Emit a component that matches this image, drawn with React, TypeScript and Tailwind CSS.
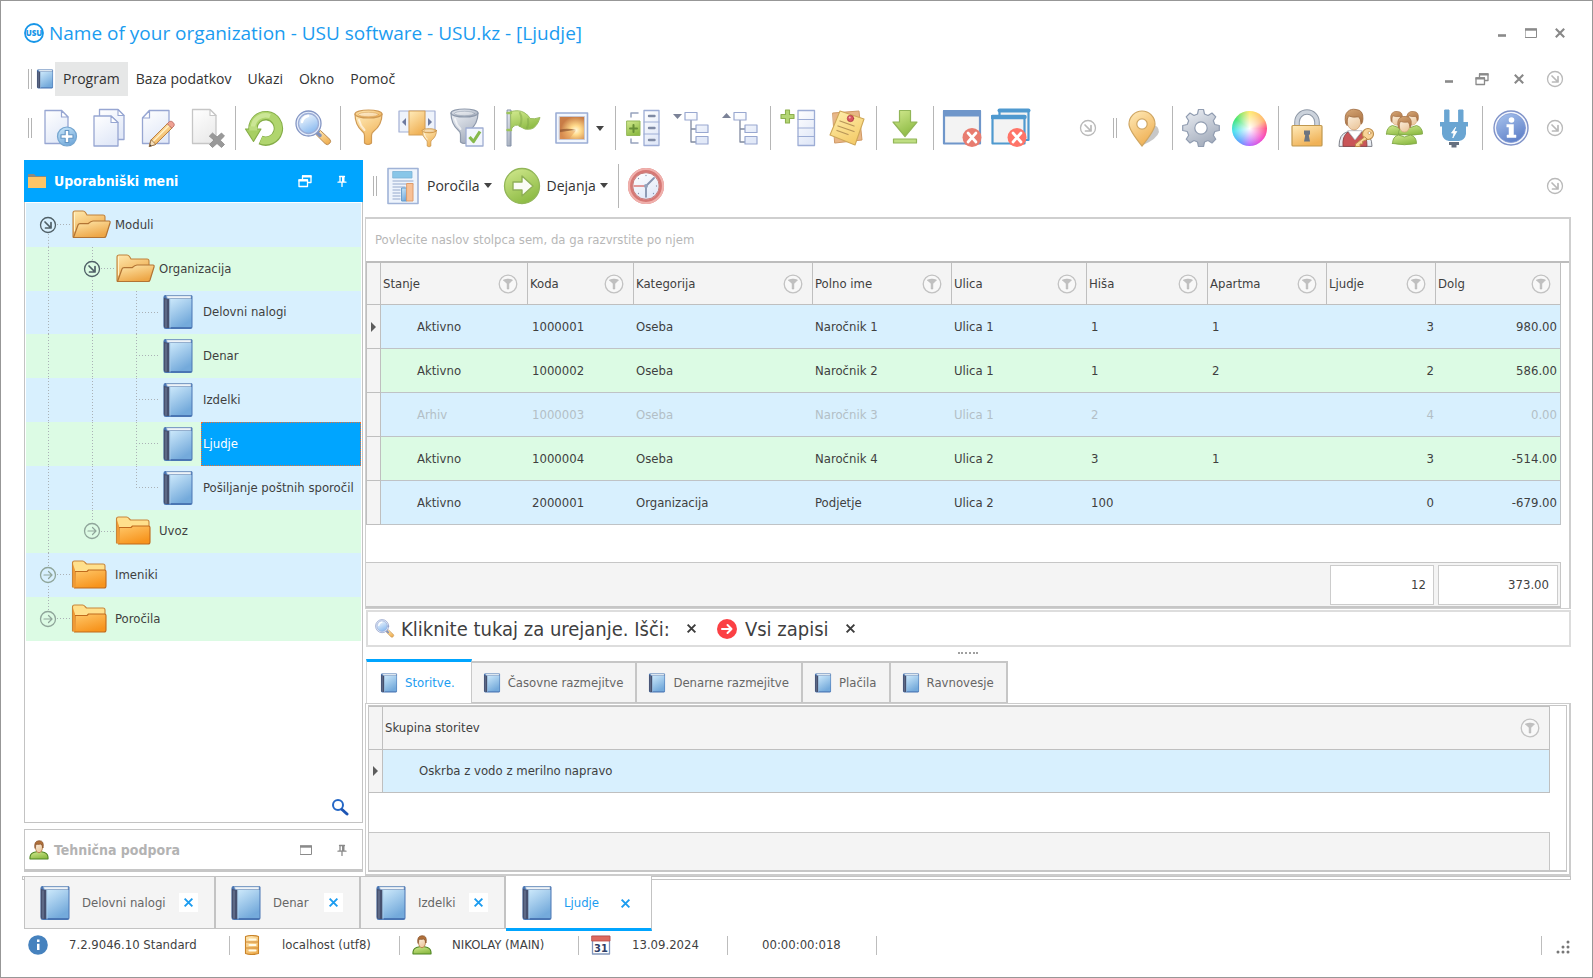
import React from "react";

/* ---------- shared gradients ---------- */

const stops: Record<string, [string, string]> = {
  paper: ["#ffffff", "#e2e9f8"],
  grayPaper: ["#ffffff", "#ebebeb"],
  blue: ["#cde9fb", "#74aadb"],
  green: ["#d3ea90", "#8fbc46"],
  gold: ["#ffebba", "#f0b257"],
  folder: ["#ffe9ae", "#eda646"],
  orange: ["#ffc86a", "#f7941d"],
  steel: ["#eef1f6", "#a6afbe"],
  info: ["#a9c4ee", "#6384ca"],
  hair: ["#d6a878", "#ad7444"],
  face: ["#fdf3e4", "#ecc9a0"],
  lens: ["#ffffff", "#8fbdf0"],
  note: ["#fff0b0", "#f5cd6c"],
};

const Gradients = () => (
  <svg className="absolute h-0 w-0" aria-hidden="true">
    <defs>
      {Object.entries(stops).map(([id, [a, b]]) => (
        <linearGradient key={id} id={id} x1="0" y1="0" x2="0.5" y2="1">
          <stop offset="0" stopColor={a} />
          <stop offset="1" stopColor={b} />
        </linearGradient>
      ))}
      <radialGradient id="sun" cx="0.65" cy="0.6" r="0.6">
        <stop offset="0" stopColor="#fffbe0" />
        <stop offset="0.35" stopColor="#ffd98a" />
        <stop offset="1" stopColor="#c87c46" />
      </radialGradient>
    </defs>
  </svg>
);

type IconProps = { className?: string };
const Ico = ({ children, className = "size-10", box = "0 0 40 40" }: { children: React.ReactNode; className?: string; box?: string }) => (
  <svg viewBox={box} className={`shrink-0 ${className}`} fill="none" strokeLinejoin="round" strokeLinecap="round" aria-hidden="true">
    {children}
  </svg>
);

/* ---------- toolbar icons ---------- */

const NewDoc = () => (
  <Ico>
    <path d="M4 2.500H20.500L27 9V35.500H4z" fill="url(#paper)" stroke="#97a6d2" strokeWidth="1.300" />
    <path d="M20.500 2.500V9H27z" fill="#fff" stroke="#97a6d2" strokeWidth="1.200" />
    <circle cx="26" cy="28.500" r="9.500" fill="url(#blue)" stroke="#76a6d0" strokeWidth="1.200" />
    <path d="M24.200 22.500h3.600v4.200h4.200v3.600h-4.200v4.200h-3.600v-4.200h-4.200v-3.600h4.200z" fill="#fff" stroke="#6295c4" strokeWidth="1.100" />
  </Ico>
);
const CopyDoc = () => (
  <Ico>
    <path d="M9.500 1.500H28L34 7.500V31.500H9.500z" fill="url(#paper)" stroke="#97a6d2" strokeWidth="1.300" />
    <path d="M28 1.500V7.500H34z" fill="#fff" stroke="#97a6d2" strokeWidth="1.100" />
    <path d="M4 8H21L28 14.500V38H4z" fill="url(#paper)" stroke="#97a6d2" strokeWidth="1.300" />
    <path d="M21 8V14.500H28z" fill="#fff" stroke="#97a6d2" strokeWidth="1.100" />
  </Ico>
);
const EditDoc = () => (
  <Ico>
    <path d="M10.500 2.500H30V35.500H3.500V10z" fill="url(#paper)" stroke="#97a6d2" strokeWidth="1.300" />
    <path d="M10.500 2.500V10H3.500z" fill="#fff" stroke="#97a6d2" strokeWidth="1.200" />
    <path d="M12 32 28.500 15.500 33 20 16.500 36.500 10.500 38.500z" fill="url(#gold)" stroke="#b98046" strokeWidth="1" />
    <path d="M14 33.500 30 17.500" stroke="#fff0c8" strokeWidth="1.400" />
    <path d="M28.500 15.500l2-2q1.500-1 3.500.800t1 3.700l-2 2z" fill="#f0a193" stroke="#c0736a" strokeWidth="0.900" />
    <path d="M12 32l-1.500 6.500 6-2z" fill="#f6dfba" stroke="#8a6948" strokeWidth="0.800" />
    <path d="M11 36.300L10.500 38.500l2.200-.700z" fill="#444" />
  </Ico>
);
const DeleteDoc = () => (
  <Ico>
    <path d="M4.500 1.500H22L28 7.500V35.500H4.500z" fill="url(#grayPaper)" stroke="#c6c6c6" strokeWidth="1.300" />
    <path d="M22 1.500V7.500H28z" fill="#fff" stroke="#c6c6c6" strokeWidth="1.100" />
    <path d="M21.500 28l3-3 4.500 4 4.500-4 3 3-4.200 4.200 4.200 4.300-3 3-4.500-4-4.500 4-3-3 4.200-4.300z" fill="#999999" stroke="#8a8a8a" strokeWidth="0.800" />
  </Ico>
);
const Refresh = () => (
  <Ico>
    <path d="M9 21A12.700 12.700 0 1 1 16.500 32" stroke="#85ad48" strokeWidth="9.400" strokeLinecap="butt" />
    <path d="M9 21A12.700 12.700 0 1 1 17 31.900" stroke="#b0d56e" strokeWidth="7.400" strokeLinecap="butt" />
    <path d="M9 19A12.700 12.700 0 0 1 26 8" stroke="#cbe696" strokeWidth="4.500" strokeLinecap="butt" />
    <path d="M1.500 21H17L9.500 33.500z" fill="#a7cf62" stroke="#85ad48" strokeWidth="1.100" />
    <path d="M5.200 18.500h8v4h-8z" fill="#bbdc7f" />
  </Ico>
);
const Magnifier = ({ className }: IconProps) => (
  <Ico className={className}>
    <path d="M24.500 25l3-2.500 9.500 9q1.500 2-.500 4t-4 .500l-9-9z" fill="url(#gold)" stroke="#b98a52" strokeWidth="1" />
    <path d="M23 23.500l4 4" stroke="#8292bb" strokeWidth="3.500" />
    <circle cx="15.500" cy="15.500" r="12.500" fill="#e7eefa" stroke="#8496c4" strokeWidth="1.300" />
    <circle cx="15.500" cy="15.500" r="10" fill="url(#lens)" stroke="#9cadd6" strokeWidth="1.300" />
    <path d="M9 14q1-5 6-6" stroke="#fff" strokeWidth="2.500" />
  </Ico>
);
const funnelShape = (
  <>
    <path d="M5 6q0 11 7.500 17.500 2 1.500 2 4V35q3.500 3 7 0v-7.500q0-2.500 2-4Q32 17 32 6z" fill="inherit" strokeWidth="1.200" />
    <ellipse cx="18.500" cy="6" rx="13.500" ry="4" fill="inherit" strokeWidth="1.200" />
    <ellipse cx="18.500" cy="6.500" rx="10" ry="2.200" fill="#fff" fillOpacity="0.450" strokeOpacity="0.600" strokeWidth="0.800" />
    <path d="M9 12q1.500 6 5.500 10" stroke="#fff" strokeOpacity="0.650" strokeWidth="2" />
  </>
);
const Funnel = () => (
  <Ico>
    <g transform="translate(1 0)" fill="url(#gold)" stroke="#cf9a55">{funnelShape}</g>
  </Ico>
);
const ColumnFunnel = () => (
  <Ico>
    <path d="M1 3H37V24H1z" fill="#eef3fb" stroke="#a2afd4" strokeWidth="1.200" />
    <path d="M11 3H27V27H11z" fill="url(#gold)" stroke="#d39f58" strokeWidth="1.100" />
    <path d="M8 10v8l-4-4zM30 10v8l4-4z" fill="#6e7b9f" />
    <g transform="translate(21.500 19.500) scale(.53)" fill="url(#gold)" stroke="#c08a42" strokeWidth="2">{funnelShape}</g>
  </Ico>
);
const FunnelCheck = () => (
  <Ico>
    <g transform="translate(-1 -1)" fill="url(#steel)" stroke="#8e99ab">{funnelShape}</g>
    <path d="M19 20H36V38H19z" fill="#f2f6fd" stroke="#9fadd2" strokeWidth="1.300" />
    <path d="M22.500 29l4 4.500L33 23.500" stroke="#86b94c" strokeWidth="3.200" strokeLinecap="butt" />
  </Ico>
);
const Flag = () => (
  <Ico>
    <path d="M4.500 2H8V38H4.500z" fill="url(#steel)" stroke="#828fa7" strokeWidth="1" />
    <path d="M8 3.500q8-2 13 1t6 6q4 1 10-1-3 10-9 11.500T17 18.500t-9 3z" fill="url(#green)" stroke="#9bbd62" strokeWidth="1" />
    <path d="M17 5q3 6 0 13M25 11q1 5-1 9" stroke="#7fa848" strokeOpacity="0.500" strokeWidth="2" />
    <path d="M4.500 5H8M4.500 22H8" stroke="#9cc45a" strokeWidth="2.500" />
  </Ico>
);
const Picture = () => (
  <Ico>
    <path d="M4 5H35.500V35H4z" fill="#f3f7fd" stroke="#9badd5" strokeWidth="1.600" />
    <path d="M7.500 8.500H32.500V31.500H7.500z" fill="url(#sun)" stroke="#c2cae0" strokeWidth="0.800" />
    <path d="M8 21.500q8-1.500 16 .500L8 24z" fill="#8d522d" fillOpacity="0.700" />
    <path d="M8 24.500l16-2-7 8.500H8z" fill="#e59a57" fillOpacity="0.500" />
  </Ico>
);
const ExpandList = () => (
  <Ico>
    <path d="M14 5H7V9M14 35H7V31" stroke="#96a2bd" strokeWidth="1.500" />
    <path d="M3 13H16V27.500H3z" fill="url(#green)" stroke="#94b859" strokeWidth="1" />
    <path d="M9.500 17v7M6 20.500h7" stroke="#678e36" strokeWidth="2" />
    <path d="M20 2.500H35V37.500H20z" fill="url(#paper)" stroke="#9dadd5" strokeWidth="1.300" />
    <path d="M20 14H35M20 26H35" stroke="#9dadd5" strokeWidth="1.200" />
    <path d="M25 8h5.500M25 20h5.500M25 32h5.500" stroke="#7f8aa4" strokeWidth="2.400" />
  </Ico>
);
const Tree = ({ up = false }: { up?: boolean }) => (
  <Ico>
    <path d={up ? "M0 10H9L4.500 5z" : "M0 6H9L4.500 11z"} fill="#7b8297" />
    <path d="M18 12V34H24M18 21H24" stroke="#808aa0" strokeWidth="1.300" />
    <g fill="url(#paper)" stroke="#99a8d0" strokeWidth="1.200">
      <path d="M12 4.500H24V12H12zM23 17H35V24.500H23zM23 28.500H35V36H23z" />
    </g>
  </Ico>
);
const AddColumn = () => (
  <Ico>
    <path d="M6.500 2h4v4.500H15v4h-4.500V15h-4v-4.500H2v-4h4.500z" fill="#b4d674" stroke="#8db04f" strokeWidth="1.100" />
    <path d="M19 2.500H35.500V37.500H19z" fill="url(#paper)" stroke="#9dadd5" strokeWidth="1.300" />
    <path d="M19 11.500H35.500M19 20H35.500M19 28.500H35.500" stroke="#9dadd5" strokeWidth="1.200" />
  </Ico>
);
const Notes = () => (
  <Ico>
    <path d="M5 5l26-2 3 29-27 3z" fill="#e9b685" stroke="#d09a66" strokeWidth="1" />
    <path d="M12 3l24 8-9 26L2 27z" fill="url(#note)" stroke="#cfa858" strokeWidth="1.100" />
    <path d="M12 13l14 5M10 18l16 5.500M9 22.500l11 4" stroke="#b89558" strokeWidth="1.300" />
    <circle cx="22.500" cy="10.500" r="3.200" fill="#d85560" stroke="#a83440" strokeWidth="0.700" />
    <circle cx="21.700" cy="9.500" r="1" fill="#f6b8bc" />
  </Ico>
);
const Download = () => (
  <Ico>
    <path d="M14.500 2.500h11v11.500H32L20 28.500 8 14h6.500z" fill="url(#green)" stroke="#92b658" strokeWidth="1.200" />
    <path d="M8.500 31h23v4h-23z" fill="#bfde82" stroke="#92b658" strokeWidth="1.200" />
  </Ico>
);
const CloseWindow = () => (
  <Ico>
    <path d="M2 3H38V35.500H2z" fill="#f3f3f3" stroke="#6f96ca" strokeWidth="2.200" />
    <path d="M2 3H38V7.500H2z" fill="#6f96ca" stroke="#6f96ca" strokeWidth="2" />
    <circle cx="30" cy="29.500" r="9.500" fill="#e87c70" />
    <path d="M26 25l8 9M34 25l-8 9" stroke="#fff" strokeWidth="2.700" />
  </Ico>
);
const CloseWindows = () => (
  <Ico>
    <path d="M8.500 2H37.500V32H8.500z" fill="#f3f3f3" stroke="#4f99cf" strokeWidth="2.200" />
    <path d="M8.500 2.500H37.500" stroke="#4f99cf" strokeWidth="4" />
    <path d="M1.500 8H33.500V35.500H1.500z" fill="#f3f3f3" stroke="#4f99cf" strokeWidth="2.200" />
    <path d="M1.500 9H33.500" stroke="#4f99cf" strokeWidth="4.500" />
    <circle cx="26" cy="29.500" r="9.500" fill="#ff7468" />
    <path d="M22 25l8 9M30 25l-8 9" stroke="#fff" strokeWidth="2.700" />
  </Ico>
);
const MapPin = () => (
  <Ico>
    <path d="M19 37q14-6 16-13-1-8-7-6z" fill="#000" fillOpacity="0.220" />
    <path d="M18 3a13 13 0 0 1 13 13q0 6-13 22Q5 22 5 16A13 13 0 0 1 18 3z" fill="url(#gold)" stroke="#cfa662" strokeWidth="1.200" />
    <circle cx="18" cy="16" r="5.200" fill="#fff" stroke="#cfa662" strokeWidth="1.200" />
  </Ico>
);
const Gear = () => (
  <Ico>
    <g fill="url(#steel)" stroke="#919db1" strokeWidth="1.200">
      <path d="M16.500 6l1-4.500h5l1 4.500 3.500 1.500L31 5l3.800 3.800-2.500 4L33.800 16.500l4.500 1v5l-4.500 1-1.500 3.700 2.500 4L31 35l-4-2.500L23.500 34l-1 4.500h-5l-1-4.500L13 32.500 9 35l-3.800-3.800 2.500-4L6.200 23.500l-4.500-1v-5l4.500-1L7.700 12.800l-2.500-4L9 5l4 2.500z" />
      <circle cx="20" cy="20" r="6.200" fill="#fff" />
    </g>
  </Ico>
);
const Lock = () => (
  <Ico>
    <path d="M10 18V14a10 10 0 0 1 20 0v4" stroke="#8e98a6" strokeWidth="5.600" strokeLinecap="butt" />
    <path d="M10 18V14a10 10 0 0 1 20 0v4" stroke="#ccd3dc" strokeWidth="3.600" strokeLinecap="butt" />
    <rect x="5" y="17.500" width="30" height="20.500" rx="1" fill="url(#gold)" stroke="#c0984f" strokeWidth="1.200" />
    <path d="M17 22.500h6v3.500l-1.200 1.500L23 33.500h-6l1.200-6L17 26z" fill="#6b7480" />
  </Ico>
);
const head = (x: number, y: number, s: number) => (
  <g transform={`translate(${x} ${y}) scale(${s})`}>
    <ellipse cx="0" cy="1.500" rx="6.500" ry="8" fill="url(#face)" stroke="#cfa277" strokeWidth="0.800" />
    <path d="M-8 3q-1.500-8 2-11 3-3 8-2 7 .500 6.500 9 0 3-1.500 5-.500-5-2.500-7-6 1-10-1Q-7-1-6.500 5z" fill="url(#hair)" stroke="#a06c42" strokeWidth="0.800" />
  </g>
);
const UserKey = () => (
  <Ico>
    <path d="M3 38q0-12 8-14l8-1 8 1q9 3 9 14z" fill="#e9edf2" stroke="#7d7f88" strokeWidth="1" />
    <path d="M7 38q-1-10 5-14l7 8 7-8q5 3 5 14z" fill="#c95558" stroke="#8e4244" strokeWidth="0.900" />
    <path d="M12 23l7 9 7-9z" fill="#fff" stroke="#b5b5bd" strokeWidth="0.800" />
    {head(18, 12, 1.05)}
    <circle cx="32" cy="26" r="5.500" fill="#f8d397" stroke="#bd8d4a" strokeWidth="1.200" />
    <circle cx="33.500" cy="25" r="1.500" fill="#fff" stroke="#bd8d4a" strokeWidth="0.700" />
    <path d="M28.500 29l-9 7v2.500h4.500v-2.500h2.500v-2.500L31 31.500z" fill="#f8d397" stroke="#bd8d4a" strokeWidth="1" />
  </Ico>
);
const greenBody = (x: number, y: number) => (
  <path d={`M${x - 12} ${y}q0-7 6-8.500l6 2 6-2q6 1.500 6 8.500-12 2.500-24 0z`} fill="url(#green)" stroke="#82a94a" strokeWidth="0.900" />
);
const Group = () => (
  <Ico>
    <g transform="translate(.5 1)">
      {greenBody(13, 25)}
      {greenBody(25, 25)}
      {head(11, 9.5, 0.7)}
      {head(27, 9.5, 0.7)}
      {greenBody(19, 34.5)}
      {head(19, 15.5, 0.8)}
    </g>
  </Ico>
);
const Plug = () => (
  <Ico>
    <path d="M11 2h4v12h-4zM25 2h4v12h-4z" fill="#6aa5d2" stroke="#6aa5d2" />
    <path d="M6 14h28v4.500H32V26q-1 6-7 7H15q-6-1-7-7v-7.500H6z" fill="#6aa5d2" />
    <path d="M21.500 19.500l-4 5.500h2.500l-1.200 5 4-6.500h-2.500z" fill="#fff" stroke="#fff" strokeWidth="0.800" />
    <path d="M15 34h10v3h-2.500v2.500h-5V37H15z" fill="#667180" />
  </Ico>
);
const InfoBig = () => (
  <Ico>
    <circle cx="20" cy="20" r="17" fill="#f4f7fd" stroke="#7f92c8" strokeWidth="1.400" />
    <circle cx="20" cy="20" r="14.500" fill="url(#info)" stroke="#869dd5" strokeWidth="0.800" />
    <circle cx="20.500" cy="12" r="2.800" fill="#fff" />
    <path d="M16 16.500h6.500V27H25v2.500h-9V27h2v-8h-2z" fill="#fff" stroke="#fff" strokeWidth="0.500" />
  </Ico>
);
const Report = () => (
  <Ico className="h-10 w-9" box="0 0 36 40">
    <path d="M3 2.500H33V37.500H3z" fill="#eef4fc" stroke="#a0b3d7" strokeWidth="1.600" />
    <path d="M8 5.500H27V12H8z" fill="#88c6e8" stroke="#79b2d6" strokeWidth="0.800" />
    <path d="M8 15H28M8 18H28M8 21H20M8 24H15M8 27H15M8 30H15M8 33H15" stroke="#b3c1dc" strokeWidth="1.300" />
    <path d="M17 22H22V35H17z" fill="url(#blue)" stroke="#6099c8" strokeWidth="1" />
    <path d="M22 17.500H28V35H22z" fill="#f7c096" stroke="#e09c6a" strokeWidth="1" />
  </Ico>
);
const GoGreen = () => (
  <Ico>
    <circle cx="20" cy="20" r="17.500" fill="url(#green)" stroke="#92b658" strokeWidth="1.300" />
    <path d="M11 16h9v-6l11 10-11 10v-6h-9z" fill="#fafcf5" stroke="#8fb056" strokeWidth="1.400" />
  </Ico>
);
const Clock = () => (
  <Ico>
    <circle cx="20" cy="20" r="18" fill="#d67875" />
    <circle cx="20" cy="20" r="17" stroke="#f0b0ac" strokeWidth="2.200" />
    <circle cx="20" cy="20" r="13.300" fill="url(#paper)" stroke="#c87c7a" strokeWidth="1" />
    <path d="M20 9.500v0M20 31v0M30.500 20v0M12.500 12.500v0M12.500 27.500v0M27.500 27.500v0" stroke="#8795b0" strokeWidth="1.300" />
    <path d="M8 20H20" stroke="#da7b79" strokeWidth="1.400" />
    <path d="M20 20V30.500M20 20L28 12" stroke="#8592ad" strokeWidth="1.800" />
    <circle cx="20" cy="20" r="2" fill="#95a3bc" />
  </Ico>
);

/* ---------- small icons ---------- */

const Book = ({ className = "h-9 w-8" }: IconProps) => (
  <Ico className={className} box="0 0 32 36">
    <path d="M3.500 1H29q1.500 0 1.500 1.500V33q0 2-2 2H4q-2.500 0-2.500-2.500V3q0-2 2-2z" fill="#4a76b4" />
    <path d="M7 5H29.500V33H7z" fill="url(#blue)" />
    <path d="M4.500 1.800H29v2.700H6q-1.500 0-1.500-2.700z" fill="#eef3f8" stroke="#8fa9c8" strokeWidth="0.600" />
    <path d="M1.800 3.500Q4 5 7.500 5V34H4q-2.200 0-2.200-2z" fill="#46506e" />
    <path d="M4 6V33" stroke="#66728f" strokeWidth="1.500" />
    <path d="M8 5V34" stroke="#a9d0ef" strokeWidth="0.800" />
  </Ico>
);
const FolderOpen = () => (
  <Ico className="h-8 w-10" box="0 0 40 32">
    <path d="M2 28V4q0-2 2-2h8q1.500 0 2.500 1.500L16 6h16q2 0 2 2v20z" fill="url(#folder)" stroke="#c0823c" strokeWidth="1.100" />
    <path d="M2.500 28.500L7 16q.500-1.300 2-1.300h8q3-2.700 5-2.700h16q1.500 0 1 2l-4 13q-.500 1.500-2 1.500z" fill="url(#folder)" stroke="#b27434" strokeWidth="1.200" />
    <path d="M3.500 4v18" stroke="#fff3c8" strokeWidth="1" />
  </Ico>
);
const FolderClosed = () => (
  <Ico className="h-8 w-10" box="0 0 40 32">
    <path d="M1.500 28V4q0-2 2-2h8q1.500 0 2.500 1.500L15.500 5H32q2 0 2 2v21z" fill="#ffe08c" stroke="#c8863a" strokeWidth="1.100" />
    <path d="M4 12.500h12l1.500-1.500H33.500q1.500 0 1.500 1.500V27q0 2-2 2H3.500z" fill="url(#orange)" stroke="#c06a1c" strokeWidth="1.100" />
    <path d="M2 5V28l2 1V11z" fill="#f09a34" />
  </Ico>
);
const Person = ({ className = "size-5" }: IconProps) => (
  <Ico className={className} box="0 0 20 20">
    <path d="M1 19q-.500-5 3.500-6.500l3-.800h5l3 .800q4 1.500 3.500 6.500z" fill="url(#green)" stroke="#4f8522" strokeWidth="1.100" />
    <ellipse cx="10" cy="7.500" rx="3.500" ry="5.200" fill="url(#face)" stroke="#b5763c" strokeWidth="0.800" />
    <path d="M6 8Q4.500 1 10 .700T14 8q-.500-3-2-4-3 .800-5 0Q6 5.500 6 8z" fill="#b0703a" stroke="#87502a" strokeWidth="0.700" />
  </Ico>
);
const DownRight = ({ className = "text-[#b9b9b9]" }: IconProps) => (
  <Ico className={`size-[18px] ${className}`} box="0 0 18 18">
    <circle cx="9" cy="9" r="7.500" stroke="currentColor" strokeWidth="1.300" />
    <path d="M6 6l5.500 5.500M12 6.500V12H6.500" stroke="currentColor" strokeWidth="1.700" />
  </Ico>
);
const RightCircle = () => (
  <Ico className="size-[18px] text-[#8fa59a]" box="0 0 18 18">
    <circle cx="9" cy="9" r="7.500" stroke="currentColor" strokeWidth="1.300" />
    <path d="M5 9H13M9.500 5.500L13 9l-3.500 3.500" stroke="currentColor" strokeWidth="1.200" />
  </Ico>
);
const FilterMark = () => (
  <Ico className="size-5" box="0 0 20 20">
    <circle cx="10" cy="10" r="8.800" fill="#f8f8f8" stroke="#c2c2c2" strokeWidth="1.300" />
    <path d="M5.500 6q4.500-2 9 0l-3.700 3.800v5.200H9.200V9.800z" fill="#c0c0c0" stroke="#b6b6b6" strokeWidth="0.600" />
  </Ico>
);
const Cross = ({ className = "size-3 text-[#888888]" }: IconProps) => (
  <Ico className={className} box="0 0 12 12">
    <path d="M1.800 1.800l8.400 8.400M10.200 1.800l-8.400 8.400" stroke="currentColor" strokeWidth="2.100" strokeLinecap="butt" />
  </Ico>
);
const Minimize = () => (
  <Ico className="size-3" box="0 0 12 12">
    <path d="M2 8.500h8" stroke="#8a8a8a" strokeWidth="2.600" strokeLinecap="butt" />
  </Ico>
);
const Maximize = () => (
  <Ico className="size-3" box="0 0 12 12">
    <path d="M.500 2H11.500V10.500H.500z" stroke="#8a8a8a" />
    <path d="M0 2.500H12" stroke="#8a8a8a" strokeWidth="2.400" strokeLinecap="butt" />
  </Ico>
);
const Restore = ({ className = "text-[#8a8a8a]" }: IconProps) => (
  <Ico className={`size-[14px] ${className}`} box="0 0 14 14">
    <path d="M4.500 5V2H13V8.500H10" stroke="currentColor" strokeWidth="1.300" />
    <path d="M4 2.300H13.500M.500 6.300H10" stroke="currentColor" strokeWidth="2.200" strokeLinecap="butt" />
    <path d="M1 6H9.500V12.500H1z" stroke="currentColor" strokeWidth="1.300" />
  </Ico>
);
const Pushpin = ({ className = "text-[#8a8a8a]" }: IconProps) => (
  <Ico className={`size-3 ${className}`} box="0 0 12 12">
    <path d="M3.500 1.500H8.500M4 1.500V7M2 7.200H10M6 7V11.500" stroke="currentColor" strokeWidth="1.300" />
    <path d="M6 1.500H8.500V7H6z" fill="currentColor" />
  </Ico>
);

/* ---------- building blocks ---------- */

const Grip = ({ className = "" }: IconProps) => (
  <span className={`h-5 w-1 shrink-0 border-x border-[#b4b4b4] ${className}`} />
);
const Sep = ({ className = "w-[7px]" }: IconProps) => (
  <span className={`flex shrink-0 justify-center ${className}`}>
    <span className="h-11 w-px bg-[#b6b6b6]" />
  </span>
);
const Tool = ({ label, children }: { label: string; children: React.ReactNode }) => (
  <button type="button" aria-label={label} className="flex w-[49px] shrink-0 items-center justify-center">
    {children}
  </button>
);
const Overflow = () => (
  <button type="button" aria-label="Več gumbov" className="shrink-0">
    <DownRight />
  </button>
);
const Caret = () => <span className="block h-0 w-0 border-x-4 border-t-[5px] border-x-transparent border-t-[#444444]" />;

const TitleBar = () => (
  <header className="flex h-[61px] items-center pt-[2px] pr-[26px] pl-[22px]">
    <svg viewBox="0 0 22 22" className="size-[22px]" aria-hidden="true">
      <circle cx="11" cy="11" r="9" fill="#fff" stroke="#1796e8" strokeWidth="1.800" />
      <text x="11" y="14" textAnchor="middle" className="fill-[#1796e8] font-['Open_Sans',sans-serif] text-[8px] font-extrabold">USU</text>
    </svg>
    <h1 className="ml-1 font-['Open_Sans',sans-serif] text-[19px] leading-6 text-[#1b9cf0]">
      Name of your organization - USU software - USU.kz - [Ljudje]
    </h1>
    <div className="ml-auto flex items-center gap-[17px]">
      <button type="button" aria-label="Pomanjšaj"><Minimize /></button>
      <button type="button" aria-label="Povečaj"><Maximize /></button>
      <button type="button" aria-label="Zapri"><Cross /></button>
    </div>
  </header>
);

const MenuBar = () => (
  <nav className="flex h-[34px] items-center pr-[28px] pl-[27px] font-['Open_Sans',sans-serif] text-[14px] text-[#333333]">
    <Grip />
    <Book className="mr-px ml-1 h-5 w-[18px]" />
    <button type="button" className="h-full bg-[#e6e7e7] px-2">Program</button>
    <button type="button" className="h-full px-2">Baza podatkov</button>
    <button type="button" className="h-full px-2">Ukazi</button>
    <button type="button" className="h-full px-2">Okno</button>
    <button type="button" className="h-full px-2">Pomoč</button>
    <div className="ml-auto flex items-center">
      <button type="button" aria-label="Pomanjšaj okno"><Minimize /></button>
      <button type="button" aria-label="Obnovi okno" className="ml-5"><Restore /></button>
      <button type="button" aria-label="Zapri okno" className="mr-[21px] ml-6"><Cross /></button>
      <Overflow />
    </div>
  </nav>
);

const ToolBar = () => (
  <div className="flex h-16 items-center pr-[28px] pl-[27px]">
    <Grip className="mr-1" />
    <Tool label="Novo"><NewDoc /></Tool>
    <Tool label="Kopiraj"><CopyDoc /></Tool>
    <Tool label="Uredi"><EditDoc /></Tool>
    <Tool label="Izbriši"><DeleteDoc /></Tool>
    <Sep />
    <Tool label="Osveži"><Refresh /></Tool>
    <Tool label="Išči"><Magnifier /></Tool>
    <Sep />
    <Tool label="Filter"><Funnel /></Tool>
    <Tool label="Filter po stolpcu"><ColumnFunnel /></Tool>
    <Tool label="Potrdi filter"><FunnelCheck /></Tool>
    <Sep />
    <Tool label="Zastavica"><Flag /></Tool>
    <Tool label="Slika"><Picture /></Tool>
    <button type="button" aria-label="Možnosti slike" className="mr-2 flex h-10 items-center"><Caret /></button>
    <Sep />
    <Tool label="Razširi seznam"><ExpandList /></Tool>
    <Tool label="Razširi drevo"><Tree /></Tool>
    <Tool label="Strni drevo"><Tree up /></Tool>
    <Sep className="w-2" />
    <Tool label="Dodaj stolpec"><AddColumn /></Tool>
    <Tool label="Opombe"><Notes /></Tool>
    <Sep className="w-2" />
    <Tool label="Prenesi"><Download /></Tool>
    <Sep className="w-2" />
    <Tool label="Zapri zavihek"><CloseWindow /></Tool>
    <Tool label="Zapri vse zavihke"><CloseWindows /></Tool>
    <div className="ml-auto flex items-center">
      <Overflow />
      <Grip className="mr-[2px] ml-4" />
      <Tool label="Lokacija"><MapPin /></Tool>
      <Sep className="w-2" />
      <Tool label="Nastavitve"><Gear /></Tool>
      <Tool label="Barve">
        <span className="size-[35px] rounded-full bg-[radial-gradient(circle,#ffffff_0%,#ffffff80_35%,transparent_70%),conic-gradient(#ffe96b,#ffb36b_60deg,#ff4f86_90deg,#f545c8_130deg,#b667ff_180deg,#5b9bff_215deg,#3fe0ee_260deg,#3ee56b_305deg,#ffe96b)]" />
      </Tool>
      <Sep className="w-2" />
      <Tool label="Zakleni"><Lock /></Tool>
      <Tool label="Pravice uporabnika"><UserKey /></Tool>
      <Tool label="Uporabniki"><Group /></Tool>
      <Tool label="Povezava"><Plug /></Tool>
      <Sep className="w-2" />
      <Tool label="Informacije"><InfoBig /></Tool>
      <span className="w-[11px]" />
      <Overflow />
    </div>
  </div>
);

/* ---------- sidebar ---------- */

type Cell = "line" | "open" | "openStart" | "closed" | "closedEnd" | "tee" | "elbow";
type Node = { text: string; cells: Cell[]; icon: "open" | "closed" | "book"; selected?: boolean };

const nodes: Node[] = [
  { text: "Moduli", cells: ["openStart"], icon: "open" },
  { text: "Organizacija", cells: ["line", "open"], icon: "open" },
  { text: "Delovni nalogi", cells: ["line", "line", "tee"], icon: "book" },
  { text: "Denar", cells: ["line", "line", "tee"], icon: "book" },
  { text: "Izdelki", cells: ["line", "line", "tee"], icon: "book" },
  { text: "Ljudje", cells: ["line", "line", "tee"], icon: "book", selected: true },
  { text: "Pošiljanje poštnih sporočil", cells: ["line", "line", "elbow"], icon: "book" },
  { text: "Uvoz", cells: ["line", "closedEnd"], icon: "closed" },
  { text: "Imeniki", cells: ["closed"], icon: "closed" },
  { text: "Poročila", cells: ["closedEnd"], icon: "closed" },
];

const TreeCell = ({ kind, bg }: { kind: Cell; bg: string }) => {
  const opened = kind.startsWith("open");
  const isNode = opened || kind.startsWith("closed");
  const y1 = kind === "openStart" ? "50%" : "0%";
  const y2 = kind === "elbow" || kind === "closedEnd" ? "50%" : "100%";
  return (
    <span className="relative flex w-11 shrink-0 items-center justify-center">
      <svg className="absolute inset-0 h-full w-full" stroke="#aab1b6" strokeDasharray="1 2" aria-hidden="true">
        <line x1="22.500" x2="22.500" y1={y1} y2={y2} />
        {kind !== "line" && <line x1="22" x2="44" y1="21.500" y2="21.500" />}
      </svg>
      {isNode && (
        <button type="button" aria-label={opened ? "Strni" : "Razširi"} className={`relative rounded-full ${bg}`}>
          {opened ? <DownRight className="text-[#4f5f66]" /> : <RightCircle />}
        </button>
      )}
    </span>
  );
};

const Sidebar = () => (
  <aside className="flex w-[339px] shrink-0 flex-col">
    <div className="flex h-[42px] items-center bg-[#00a5ff] pr-[15px] pl-1 text-white">
      <svg viewBox="0 0 18 14" className="h-[14px] w-[18px]" aria-hidden="true">
        <path d="M0 0H6L8 2H18V5H0z" fill="#8a8a80" />
        <path d="M0 3H18V14H0z" fill="#fec567" />
      </svg>
      <h2 className="ml-2 text-[14px] font-bold">Uporabniški meni</h2>
      <button type="button" aria-label="Obnovi" className="ml-auto"><Restore className="text-white" /></button>
      <button type="button" aria-label="Pripni" className="ml-6"><Pushpin className="text-white" /></button>
    </div>
    <div className="flex flex-1 flex-col border border-t-0 border-[#c3c3c3] px-px pt-px">
      <ul className="flex h-[438px] flex-col">
        {nodes.map((n, i) => {
          const bg = i % 2 ? "bg-[#dcfbe4]" : "bg-[#d8f0fe]";
          return (
            <li key={n.text} className={`flex flex-1 ${bg}`}>
              {n.cells.map((c, k) => (
                <TreeCell key={k} kind={c} bg={bg} />
              ))}
              <span className="flex w-[43px] shrink-0 items-center pl-px">
                {n.icon === "book" ? <span className="pl-[3px]"><Book /></span> : n.icon === "open" ? <FolderOpen /> : <FolderClosed />}
              </span>
              <a
                href="#"
                className={`flex flex-1 items-center border border-dotted pl-px whitespace-nowrap ${
                  n.selected ? "border-[#f07030] bg-[#00a5ff] text-white" : "border-transparent"
                }`}
              >
                {n.text}
              </a>
            </li>
          );
        })}
      </ul>
      <button type="button" aria-label="Išči po meniju" className="mt-auto mr-3 mb-[6px] self-end">
        <Ico className="size-[18px]" box="0 0 18 18">
          <circle cx="7" cy="7" r="5" stroke="#2467c6" strokeWidth="2" />
          <path d="M11 11.500l5 4.500" stroke="#1d55b4" strokeWidth="3" />
        </Ico>
      </button>
    </div>
    <div className="mt-[6px] mb-[4px] flex h-[43px] items-center border border-b-[3px] border-[#c6c6c6] pr-[14px] pl-1">
      <Person />
      <h2 className="ml-[5px] text-[14px] font-bold text-[#b3b3b3]">Tehnična podpora</h2>
      <button type="button" aria-label="Povečaj podporo" className="ml-auto"><Maximize /></button>
      <button type="button" aria-label="Pripni podporo" className="ml-6"><Pushpin /></button>
    </div>
  </aside>
);

/* ---------- main grid ---------- */

type Col = { name: string; w: string; right?: boolean; pad: string };
const cols: Col[] = [
  { name: "Stanje", w: "w-[147px]", pad: "pl-9" },
  { name: "Koda", w: "w-[106px]", pad: "pl-1" },
  { name: "Kategorija", w: "w-[179px]", pad: "pl-[2px]" },
  { name: "Polno ime", w: "w-[139px]", pad: "pl-[2px]" },
  { name: "Ulica", w: "w-[135px]", pad: "pl-[2px]" },
  { name: "Hiša", w: "w-[121px]", pad: "pl-1" },
  { name: "Apartma", w: "w-[119px]", pad: "pl-1" },
  { name: "Ljudje", w: "w-[109px]", right: true, pad: "pr-[2px]" },
  { name: "Dolg", w: "w-[125px]", right: true, pad: "pr-[3px]" },
];
const rows = [
  ["Aktivno", "1000001", "Oseba", "Naročnik 1", "Ulica 1", "1", "1", "3", "980.00"],
  ["Aktivno", "1000002", "Oseba", "Naročnik 2", "Ulica 1", "1", "2", "2", "586.00"],
  ["Arhiv", "1000003", "Oseba", "Naročnik 3", "Ulica 1", "2", "", "4", "0.00"],
  ["Aktivno", "1000004", "Oseba", "Naročnik 4", "Ulica 2", "3", "1", "3", "-514.00"],
  ["Aktivno", "2000001", "Organizacija", "Podjetje", "Ulica 2", "100", "", "0", "-679.00"],
];

const Pointer = () => <span className="mx-auto block w-0 border-y-[5px] border-l-[5px] border-y-transparent border-l-[#5c5c5c]" />;

const HeaderCell = ({ name }: { name: string }) => (
  <th scope="col" className="border-r border-b border-[#bfbfbf] p-0 text-left font-normal">
    <div className="flex items-center justify-between pr-[9px] pl-[2px]">
      {name}
      <button type="button" aria-label={`Filtriraj ${name}`}><FilterMark /></button>
    </div>
  </th>
);

const MainGrid = () => (
  <section className="flex h-[392px] flex-col border border-t-2 border-r-2 border-[#cfcfcf]">
    <p className="flex h-[42px] shrink-0 items-center pl-[9px] text-[#b7b7b7]">Povlecite naslov stolpca sem, da ga razvrstite po njem</p>
    <div className="border-t-2 border-[#bdbdbd] pr-2">
      <table className="w-full table-fixed border-separate border-spacing-0 border-l border-[#bfbfbf]">
        <colgroup>
          <col className="w-[14px]" />
          {cols.map((c) => (
            <col key={c.name} className={c.w} />
          ))}
        </colgroup>
        <thead>
          <tr className="h-[42px] bg-[#f4f4f4]">
            <th aria-label="Kazalec" className="border-r border-b border-[#bfbfbf] p-0" />
            {cols.map((c) => (
              <HeaderCell key={c.name} name={c.name} />
            ))}
          </tr>
        </thead>
        <tbody>
          {rows.map((r, i) => (
            <tr key={r[1]} className={`h-11 ${i % 2 ? "bg-[#dcfbe4]" : "bg-[#d8f0fe]"} ${r[0] === "Arhiv" ? "text-[#b3bfc6]" : ""}`}>
              <td className="border-r border-b border-[#bfbfbf] bg-[#f4f4f4] p-0">{i === 0 && <Pointer />}</td>
              {r.map((v, k) => (
                <td key={k} className={`border-b border-[#bfc3c6] p-0 last:border-r ${cols[k].pad} ${cols[k].right ? "text-right" : ""}`}>
                  {v}
                </td>
              ))}
            </tr>
          ))}
        </tbody>
      </table>
    </div>
    <div className="mt-auto mr-2 flex h-[46px] items-center justify-end gap-1 border border-b-2 border-l-0 border-[#c6c6c6] bg-[#f4f4f4] pr-[2px]">
      <output className="flex h-10 w-[104px] items-center justify-end border border-[#cccccc] bg-white pr-[7px]">12</output>
      <output className="flex h-10 w-[120px] items-center justify-end border border-[#cccccc] bg-white pr-2">373.00</output>
    </div>
  </section>
);

const SearchBar = () => (
  <div className="mt-px ml-px flex h-[37px] items-center border-2 border-[#dddddd] pl-[6px] text-[20px] leading-6">
    <Magnifier className="size-[21px]" />
    <button type="button" className="ml-[6px]">Kliknite tukaj za urejanje. Išči:</button>
    <button type="button" aria-label="Počisti iskanje" className="ml-4"><Cross className="size-[11px] text-[#3c3c3c]" /></button>
    <span className="ml-5 flex size-5 items-center justify-center rounded-full bg-[#fb4044]">
      <Ico className="size-3" box="0 0 12 12">
        <path d="M1 6H10.500M6.500 2L10.500 6l-4 4" stroke="#fff" strokeWidth="2" />
      </Ico>
    </span>
    <button type="button" className="ml-2">Vsi zapisi</button>
    <button type="button" aria-label="Odstrani filter" className="ml-4"><Cross className="size-[11px] text-[#3c3c3c]" /></button>
  </div>
);

const detailTabs = ["Časovne razmejitve", "Denarne razmejitve", "Plačila", "Ravnovesje"];

const DetailTabs = () => (
  <div role="tablist" className="ml-px flex h-11 items-end">
    <button type="button" role="tab" aria-selected="true" className="flex h-full items-center gap-[7px] border-t-[3px] border-r border-l border-t-[#00a5ff] border-r-[#c9c9c9] border-l-[#d6d6d6] bg-white pr-4 pl-[13px] text-[#1b9cf0]">
      <Book className="h-5 w-[18px]" />
      Storitve.
    </button>
    {detailTabs.map((t) => (
      <button key={t} type="button" role="tab" aria-selected="false" className="flex h-[42px] items-center gap-[7px] border-t-2 border-r-2 border-b border-[#c6c6c6] bg-[#f4f4f4] pr-3 pl-[11px] text-[#666666]">
        <Book className="h-5 w-[18px]" />
        {t}
      </button>
    ))}
  </div>
);

const DetailGrid = () => (
  <section className="flex min-h-[172px] flex-1 flex-col border border-r-2 border-b-2 border-[#cccccc] p-px pr-[2px] pb-[2px] pl-[2px]">
    <div className="flex flex-1 flex-col border border-b-2 border-[#c6c6c6] pr-4">
      <table className="w-full table-fixed border-separate border-spacing-0 border-t border-[#bfbfbf]">
        <colgroup>
          <col className="w-[14px]" />
          <col />
        </colgroup>
        <thead>
          <tr className="h-[43px] bg-[#f4f4f4]">
            <th aria-label="Kazalec" className="border-r border-b border-[#bfbfbf] p-0" />
            <HeaderCell name="Skupina storitev" />
          </tr>
        </thead>
        <tbody>
          <tr className="h-[43px] bg-[#d8f0fe]">
            <td className="border-r border-b border-[#bfbfbf] bg-[#f4f4f4] p-0"><Pointer /></td>
            <td className="border-r border-b border-[#bfbfbf] p-0 pl-9">Oskrba z vodo z merilno napravo</td>
          </tr>
        </tbody>
      </table>
      <div className="mt-auto h-[38px] border-t border-r border-[#c6c6c6] bg-[#f4f4f4]" />
    </div>
  </section>
);

/* ---------- bottom ---------- */

const docTabs = [
  { name: "Delovni nalogi", w: "w-[192px]" },
  { name: "Denar", w: "w-[145px]" },
  { name: "Izdelki", w: "w-[145px]" },
];

const DocTabs = () => (
  <div className="mr-[21px] ml-[21px]">
    <div className="h-1 border border-[#c3c3c3] bg-white" />
    <div role="tablist" className="-mt-[3px] ml-[2px] flex items-start">
      {docTabs.map((t) => (
        <div key={t.name} className={`flex h-[52px] items-center border-r-2 border-b border-[#c3c3c3] bg-[#f4f4f4] pl-[14px] first:border-l ${t.w}`}>
          <Book />
          <button type="button" role="tab" aria-selected="false" className="ml-[11px] text-[#666666]">{t.name}</button>
          <button type="button" aria-label={`Zapri ${t.name}`} className="mr-4 ml-auto flex size-[19px] items-center justify-center bg-white">
            <Cross className="size-[11px] text-[#1b9cf0]" />
          </button>
        </div>
      ))}
      <div className="-mt-px flex h-[55px] w-[146px] items-center border-r border-b-[3px] border-r-[#c3c3c3] border-b-[#00a5ff] bg-white pt-[2px] pl-[15px]">
        <Book />
        <button type="button" role="tab" aria-selected="true" className="ml-[11px] text-[#1b9cf0]">Ljudje</button>
        <button type="button" aria-label="Zapri Ljudje" className="mr-4 ml-auto flex size-[19px] items-center justify-center">
          <Cross className="size-[11px] text-[#1b9cf0]" />
        </button>
      </div>
    </div>
  </div>
);

const StatusSep = () => <span className="h-[19px] w-px bg-[#bdbdbd]" />;

const StatusBar = () => (
  <footer className="mb-[18px] flex h-7 items-center pr-[22px] pl-[27px]">
    <Ico className="size-5" box="0 0 20 20">
      <circle cx="10" cy="10" r="9.800" fill="#4682be" />
      <path d="M9 4.500h2.500v2.600H9zM9 8.700h2.500V15H9z" fill="#fff" />
    </Ico>
    <span className="w-[181px] pl-[21px]">7.2.9046.10 Standard</span>
    <StatusSep />
    <Ico className="ml-3 size-5" box="0 0 20 20">
      <path d="M3.500 1.500q6.500-2 13 0v17q-6.500 2-13 0z" fill="url(#gold)" stroke="#c98328" strokeWidth="1.100" />
      <path d="M7.500 4.500h6M7.500 10h6M7.500 15.500h6" stroke="#fffbe8" strokeWidth="2.200" />
      <path d="M3.500 7h13M3.500 13h13" stroke="#d18a35" strokeWidth="1.100" />
    </Ico>
    <span className="w-[137px] pl-5">localhost (utf8)</span>
    <StatusSep />
    <Person className="ml-3 size-5" />
    <span className="w-[146px] pl-5">NIKOLAY (MAIN)</span>
    <StatusSep />
    <Ico className="ml-3 size-5" box="0 0 20 20">
      <path d="M1.500 1.500H18.500V19H1.500z" fill="#fff" stroke="#8196bb" strokeWidth="1.300" />
      <path d="M1 1H19V6H1z" fill="#dd6b60" stroke="#b94a44" strokeWidth="0.800" />
      <text x="10" y="16.500" textAnchor="middle" className="fill-[#2f3e66] text-[11px] font-bold">31</text>
    </Ico>
    <span className="w-[116px] pl-[21px]">13.09.2024</span>
    <StatusSep />
    <span className="w-[148px] pl-[34px]">00:00:00:018</span>
    <StatusSep />
    <span className="ml-auto flex items-center gap-[14px]">
      <StatusSep />
      <Ico className="mt-1 size-[14px]" box="0 0 14 14">
        <path d="M12 2v0M7 7v0M12 7v0M2 12v0M7 12v0M12 12v0" stroke="#777777" strokeWidth="3" />
      </Ico>
    </span>
  </footer>
);

export default function App() {
  return (
    <div className="flex min-h-screen flex-col border border-[#979797] bg-white font-['DejaVu_Sans_Condensed','Noto_Sans',sans-serif] text-[13px] leading-5 text-[#3f3f3f]">
      <Gradients />
      <TitleBar />
      <MenuBar />
      <ToolBar />
      <main className="flex flex-1 gap-[2px] pr-[21px] pl-[23px]">
        <Sidebar />
        <div className="flex min-w-0 flex-1 flex-col">
          <div className="mb-[6px] flex h-[51px] shrink-0 items-center pr-[7px] pl-2 font-['Open_Sans',sans-serif] text-[14px] text-[#333333]">
            <Grip className="mr-2" />
            <button type="button" className="flex items-center">
              <Report />
              <span className="mr-1 ml-[6px]">Poročila</span>
              <Caret />
            </button>
            <button type="button" className="ml-[10px] flex items-center">
              <GoGreen />
              <span className="mr-1 ml-[5px]">Dejanja</span>
              <Caret />
            </button>
            <span className="w-[7px]" />
            <Sep />
            <Tool label="Ura"><Clock /></Tool>
            <span className="ml-auto flex"><Overflow /></span>
          </div>
          <MainGrid />
          <SearchBar />
          <div className="flex h-3 items-center justify-center">
            <span className="w-5 border-t-2 border-dotted border-[#a0a0a0]" />
          </div>
          <DetailTabs />
          <DetailGrid />
        </div>
      </main>
      <DocTabs />
      <StatusBar />
    </div>
  );
}
